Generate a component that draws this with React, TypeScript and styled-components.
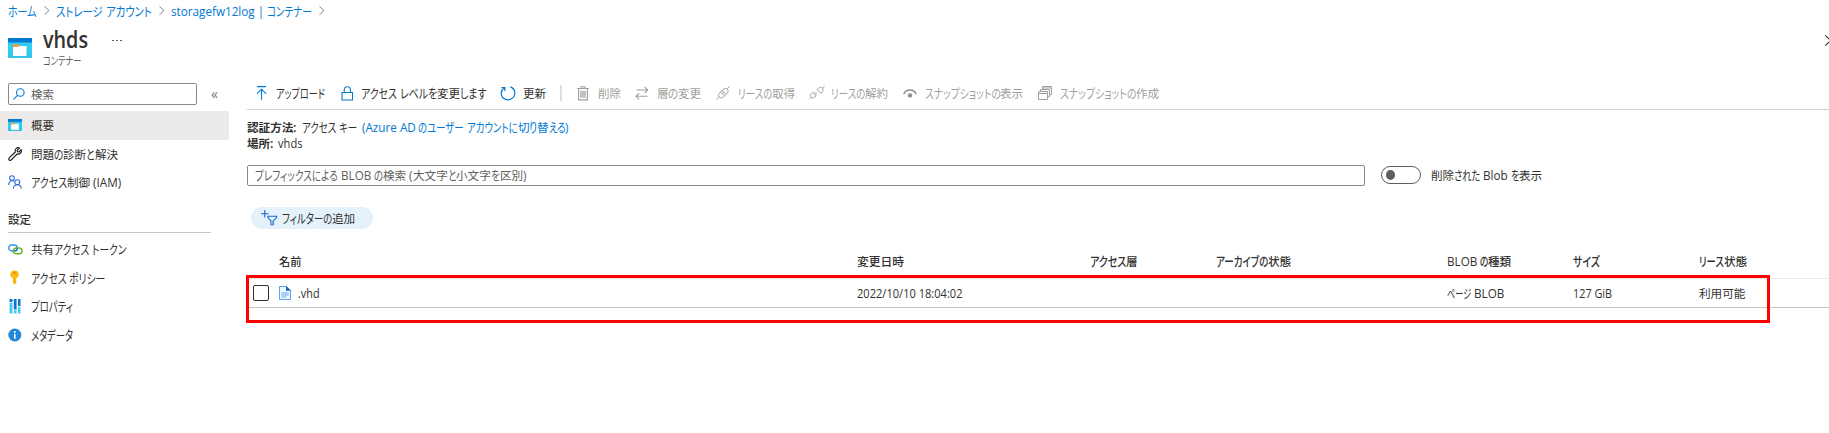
import React, { useLayoutEffect, useRef } from "react";
import styled, { createGlobalStyle, css } from "styled-components";

const Global = createGlobalStyle`
  html, body { margin: 0; padding: 0; background: #fff; overflow: hidden; }
  * { box-sizing: border-box; }
  body { font-family: "Open Sans", "Noto Sans CJK JP", sans-serif; font-size: 13px; color: #323130; }
`;

const Line = styled.span<{ $w: number; $weight: number; $color?: string; $size?: number }>`
  display: inline-flex;
  align-items: baseline;
  flex: none;
  width: ${(p) => p.$w}px;
  height: 16px;
  line-height: 16px;
  white-space: pre;
  font-size: ${(p) => p.$size ?? 13}px;
  font-weight: ${(p) => p.$weight};
  color: ${(p) => p.$color ?? "inherit"};
`;

const Run = styled.span<{ $kind: "kana" | "kanji" | "latin" }>`
  display: inline-block;
  flex: none;
  line-height: 16px;
  transform-origin: 0 50%;
  ${(p) =>
    p.$kind !== "latin" &&
    css`
      font-family: "Noto Sans CJK JP", sans-serif;
      font-size: ${p.$kind === "kana" ? 0.97 : 0.91}em;
      font-feature-settings: "palt";
    `}
`;

const KANA = /[\u3040-\u30ff]/;
const KANJI = /[\u4e00-\u9fff]/;
const LATIN_SCALE = 0.9;

const kindOf = (r: string) => (KANA.test(r) ? "kana" : KANJI.test(r) ? "kanji" : "latin");

type TextProps = { t: string; w: number; weight?: number; color?: string; size?: number };

function Text({ t, w, weight = 400, color, size }: TextProps) {
  const ref = useRef<HTMLSpanElement>(null);
  const runs = t.match(/[\u3040-\u30ff]+|[\u4e00-\u9fff]+|[^\u3040-\u30ff\u4e00-\u9fff]+/g) ?? [];

  useLayoutEffect(() => {
    const els = Array.from(ref.current?.children ?? []) as HTMLElement[];
    els.forEach((e) => {
      e.style.width = "auto";
      e.style.transform = "none";
    });
    const widths = els.map((e) => e.getBoundingClientRect().width);
    const hasKana = KANA.test(t);
    const fixedScale = (i: number) => {
      const kind = kindOf(runs[i]);
      if (!hasKana || kind === "kana") return null;
      return kind === "kanji" ? 0.98 : LATIN_SCALE;
    };
    let fixed = 0;
    let flexible = 0;
    els.forEach((_, i) => {
      const s = fixedScale(i);
      if (s === null) flexible += widths[i];
      else fixed += widths[i] * s;
    });
    const k = flexible ? (w - fixed) / flexible : 1;
    els.forEach((e, i) => {
      const f = fixedScale(i) ?? k;
      e.style.width = `${widths[i] * f}px`;
      e.style.transform = `scaleX(${f})`;
    });
  }, [t, w, weight, size]);

  return (
    <Line ref={ref} $w={w} $weight={weight} $color={color} $size={size}>
      {runs.map((r, i) => (
        <Run key={i} $kind={kindOf(r)}>
          {r}
        </Run>
      ))}
    </Line>
  );
}

/* ---------- icons ---------- */

const Svg = styled.svg`
  display: block;
  flex: none;
  fill: none;
  overflow: visible;
`;

const Crumb = () => (
  <Svg width="6" height="9" viewBox="0 0 6 9" stroke="#8a8886" strokeWidth="1">
    <path d="M.5.5 5 4.500.5 8.500" />
  </Svg>
);

const ContainerIcon = ({ w, h }: { w: number; h: number }) => (
  <Svg width={w} height={h} viewBox="0 0 24 20" preserveAspectRatio="none">
    <rect width="24" height="20" rx="0.8" fill="#35c3ea" />
    <path d="M0 4h24v12H0z" fill="#32d4f5" opacity=".55" />
    <path d="M0 4.500V.8Q0 0 .8 0h22.400q.8 0 .8.8V4.500z" fill="#0078d4" />
    <path d="M5 8h13.500v10H5z" fill="#fff" />
    <path d="M5 6.300h5.500l1.300 1.200-1.300 1.500H5z" fill="#f59a3c" />
  </Svg>
);

const SearchIcon = () => (
  <Svg width="12" height="12" viewBox="0 0 12 12" stroke="#0078d4" strokeWidth="1.1">
    <circle cx="7.300" cy="4.500" r="3.800" />
    <path d="M4.500 7.300.5 11.400" />
  </Svg>
);

const WrenchIcon = () => (
  <Svg width="14" height="14" viewBox="0 0 14 14" stroke="#1b1a19" strokeWidth="1.150" strokeLinejoin="round">
    <path d="M11.600 1.100 9.200 3.400l.2 1.400 1.400.2 2.400-2.300c.5 1.300.2 2.600-.7 3.500-.9.900-2.200 1.200-3.400.8L3.300 12.900c-.6.6-1.500.6-2.100.1-.6-.6-.6-1.500 0-2.100L7.300 5C6.900 3.800 7.200 2.500 8.100 1.600c.9-.9 2.300-1.100 3.500-.5z" />
  </Svg>
);

const PeopleIcon = () => (
  <Svg width="14" height="14" viewBox="0 0 14 14" stroke="#2b6fd6" strokeWidth="1.100">
    <circle cx="4" cy="3" r="2.300" />
    <path d="M.6 10c.1-2.800 1.500-4.300 3.500-4.300.8 0 1.500.2 2 .7" />
    <circle cx="9.300" cy="7.200" r="2.500" />
    <path d="M5.300 13.600c.2-2.400 1.800-3.800 4-3.800s3.800 1.400 4 3.800" />
  </Svg>
);

const LinkIcon = () => (
  <Svg width="15" height="11" viewBox="0 0 15 11" strokeWidth="1.400">
    <rect x=".8" y="1" width="8.500" height="5.800" rx="2.900" stroke="#2f9bea" />
    <rect x="5.200" y="4" width="8.800" height="5.800" rx="2.900" stroke="#6bb52c" />
    <path d="M6 6.800h1.200c1.200 0 2.100-1 2.100-2.500" stroke="#1b7fd0" />
  </Svg>
);

const KeyIcon = () => (
  <Svg width="14" height="15" viewBox="0 0 14 15">
    <path d="M6.500.5c2.500 0 4.300 1.600 4.300 3.900 0 1.700-.9 2.900-2.500 3.500v5L6.800 14.500 5 12.900V7.900C3.300 7.300 2.300 6.100 2.300 4.400 2.300 2.100 4 .5 6.500.5z" fill="#fdb813" />
    <circle cx="6.500" cy="2.800" r="1.100" fill="#c98410" />
    <path d="M6 8v5" stroke="#e9a50a" strokeWidth=".8" />
  </Svg>
);

const BarsIcon = () => (
  <Svg width="14" height="15" viewBox="0 0 14 15">
    <path d="M1.500 0h3v3h-3zM5.800 0h2.800v10.500H5.800zM10 0h2.500v7H10z" fill="#0f76cf" />
    <path d="M1.500 3.800h3V14.500h-3zM5.800 11.300h2.800v3.200H5.800zM10 7.800h2.500v6.700H10z" fill="#42cdef" />
  </Svg>
);

const InfoIcon = () => (
  <Svg width="14" height="14" viewBox="0 0 14 14">
    <circle cx="6.800" cy="7" r="6.500" fill="#2488d8" />
    <circle cx="6.800" cy="3.900" r="1" fill="#fff" />
    <path d="M6.800 5.900v4.900" stroke="#fff" strokeWidth="1.600" />
  </Svg>
);

const UploadIcon = () => (
  <Svg width="11" height="14" viewBox="0 0 11 14" stroke="#0078d4" strokeWidth="1.100">
    <path d="M1 .6h9M5.500 13.800V3.300M1 7.700l4.500-4.500L10 7.700" />
  </Svg>
);

const LockIcon = () => (
  <Svg width="13" height="15" viewBox="0 0 13 15" stroke="#0078d4" strokeWidth="1.100">
    <path d="M1 6.500h10.500v7.500H1zM3.200 6.500V3.800C3.200 1.900 4.500.7 6.300.7s3.100 1.200 3.100 3.100v2.700" />
  </Svg>
);

const RefreshIcon = () => (
  <Svg width="16" height="15" viewBox="0 0 16 15" stroke="#0078d4" strokeWidth="1.200">
    <path d="M4.300 1.800C2.300 3 1.200 5 1.200 7.200c0 3.800 3.100 6.700 6.800 6.700s6.800-3 6.800-6.700c0-2.900-1.800-5.300-4.500-6.300M1.500 1.500h3.300v3.400" />
  </Svg>
);

const gray = "#a19f9d";

const TrashIcon = () => (
  <Svg width="12" height="15" viewBox="0 0 12 15" stroke={gray} strokeWidth="1.100">
    <path d="M.3 2.500h11.400M4 2.300V.8h4v1.500M1.600 2.700v11.200h8.800V2.700" />
    <path d="M4 4.800v7M6 4.800v7M8 4.800v7" strokeWidth="1.300" />
  </Svg>
);

const SwapIcon = () => (
  <Svg width="14" height="14" viewBox="0 0 14 14" stroke={gray} strokeWidth="1.100">
    <path d="M1.500 4h11.300M9.700.9 12.800 4 9.700 7.100M12.500 10.300H1M4.100 7.200 1 10.300l3.100 3.100" />
  </Svg>
);

const PlugIcon = () => (
  <Svg width="14" height="14" viewBox="0 0 14 14" stroke={gray} strokeWidth="1">
    <path d="m3.300 7.300 4-4c1.200-1.200 2.900-1.200 4-.1s1.100 2.800-.1 4l-4 4c-1.100 1-2.700 1-3.800-.1s-1.200-2.700-.1-3.800zM.4 13.600l2.900-2.900M11.200 2.800 13.600.4M4.600 6l3.900 3.900M6.200 4.400l3.900 3.900M6.300 7.700l1.700-1.700" />
  </Svg>
);

const UnplugIcon = () => (
  <Svg width="16" height="14" viewBox="0 0 16 14" stroke={gray} strokeWidth="1">
    <path d="M8 3.600 9.800 2.200c1.100-1.100 2.600-1.100 3.600-.1s1 2.500-.1 3.600L11.900 7.500zM3.500 6.200 2.300 7.500c-1.100 1.100-1.100 2.500-.1 3.600s2.500 1 3.600-.1L7.300 9.800zM13.600 2 15.600.3M.3 13.300l2-2M5 7.700l1.600-1.600M6.200 8.800l1.600-1.600" />
  </Svg>
);

const EyeIcon = () => (
  <Svg width="14" height="9" viewBox="0 0 14 9">
    <path d="M.8 5.300C1.700 2.600 4 1.100 7 1.100s5.300 1.500 6.200 4.200" stroke="#8f8d8b" strokeWidth="1.500" />
    <circle cx="7" cy="6.400" r="2.200" fill="#8f8d8b" />
  </Svg>
);

const LayersIcon = () => (
  <Svg width="14" height="14" viewBox="0 0 14 14" stroke={gray} strokeWidth="1">
    <path d="M.5 5.500h9v8h-9zM.5 7.500h9M2.500 5.300V3.500h9v7.300H9.800M4.500 3.300V.5h9v8.200h-1.700M4.500 2h9" />
  </Svg>
);

const FilterIcon = () => (
  <Svg width="17" height="16" viewBox="0 0 17 16" stroke="#1267cf" strokeWidth="1.100">
    <path d="M3.800 0v7.600M0 3.800h7.600" />
    <path d="M6.800 6.300h8.900v1L12.400 11v3.800H10V11L6.800 7.300z" />
    <path d="M10 10.500h2.400v4H10z" fill="#7eaee8" stroke="none" />
  </Svg>
);

const FileIcon = () => (
  <Svg width="12" height="14" viewBox="0 0 12 14">
    <path d="M.5.5h7L11.500 4.500v9H.5z" fill="#eef6ff" stroke="#5ea0ef" />
    <path d="M7 0 12 4.800H7z" fill="#0f6cbd" />
    <path d="M2.300 7h7.400M2.300 9h7.400M2.300 11h5" stroke="#69a9f0" strokeWidth="1.100" />
  </Svg>
);

const CloseIcon = () => (
  <Svg width="11" height="11" viewBox="0 0 11 11" stroke="#323130" strokeWidth="1.100">
    <path d="m.3.300 10.400 10.400M10.700.3.300 10.700" />
  </Svg>
);

/* ---------- layout ---------- */

const Page = styled.div`
  width: 1829px;
  height: 433px;
  overflow: hidden;
  background: #fff;
`;

const Breadcrumbs = styled.nav`
  display: flex;
  align-items: center;
  height: 21px;
  padding-left: 8px;
  color: #0078d4;
  svg {
    margin: 0 6.500px 0 7px;
  }
`;

const Header = styled.header`
  display: flex;
  height: 62px;
  padding: 17px 0 0 8px;
`;

const HeaderTitles = styled.div`
  display: flex;
  flex-direction: column;
  margin: -7px 0 0 11px;
`;

const TitleRow = styled.div`
  display: flex;
  align-items: center;
  height: 17px;
`;

const Dots = styled.div<{ $gap: number; $size: number }>`
  display: flex;
  gap: ${(p) => p.$gap}px;
  i {
    width: ${(p) => p.$size}px;
    height: ${(p) => p.$size}px;
    border-radius: 50%;
    background: #494745;
  }
`;

const TitleDots = styled(Dots)`
  margin: 2px 0 0 24px;
`;

const Subtitle = styled.div`
  display: flex;
  margin-top: 4px;
  color: #605e5c;
`;

const CloseSlot = styled.div`
  flex: none;
  margin: -3px -7px 0 auto;
`;

const Columns = styled.div`
  display: flex;
`;

const Sidebar = styled.aside`
  width: 229px;
  flex: none;
`;

const SearchRow = styled.div`
  display: flex;
  align-items: center;
  gap: 14px;
  height: 22px;
  margin: 0 0 6px 8px;
`;

const SearchBox = styled.div`
  display: flex;
  align-items: center;
  gap: 6px;
  width: 189px;
  height: 22px;
  padding-left: 4px;
  border: 1px solid #8a8886;
  border-radius: 2px;
  color: #605e5c;
`;

const Collapse = styled.span`
  font-size: 14px;
  line-height: 16px;
  color: #797775;
`;

const NavItem = styled.div<{ $active?: boolean }>`
  display: flex;
  align-items: center;
  height: 28.600px;
  padding-left: 8px;
  background: ${(p) => (p.$active ? "#edebe9" : "transparent")};
`;

const NavIcon = styled.span`
  display: flex;
  width: 22.500px;
`;

const NavHeading = styled.div`
  display: flex;
  align-items: flex-end;
  width: 203px;
  height: 36.700px;
  margin: 0 0 1.500px 8px;
  padding-bottom: 5px;
  border-bottom: 1px solid #c8c6c4;
`;

const Main = styled.main`
  position: relative;
  width: 1582px;
  flex: none;
  margin-left: 18px;
`;

const Toolbar = styled.div`
  display: flex;
  align-items: center;
  height: 27px;
  padding-bottom: 6px;
  border-bottom: 1px solid #d2d0ce;
`;

const Tool = styled.div<{ $ml: number; $off?: boolean }>`
  display: flex;
  align-items: center;
  flex: none;
  margin-left: ${(p) => p.$ml}px;
  color: ${(p) => (p.$off ? "#a19f9d" : "#323130")};
`;

const ToolIcon = styled.span<{ $w: number }>`
  display: flex;
  width: ${(p) => p.$w}px;
`;

const Separator = styled.span`
  width: 2px;
  height: 16px;
  margin-left: 14px;
  background: #e1dfdd;
`;

const Facts = styled.div`
  padding-top: 9px;
  height: 55px;
`;

const Fact = styled.div`
  display: flex;
  gap: 4.500px;
  height: 16px;
`;

const SearchBar = styled.div`
  display: flex;
  align-items: center;
  height: 21px;
`;

const PrefixInput = styled.div`
  display: flex;
  align-items: center;
  width: 1118px;
  height: 21px;
  padding: 0 0 1px 7px;
  border: 1px solid #8a8886;
  border-radius: 2px;
  color: #605e5c;
`;

const Toggle = styled.span`
  display: flex;
  align-items: center;
  width: 40px;
  height: 18px;
  margin: 0 9.500px 1px 16px;
  padding-left: 4px;
  border: 1px solid #605e5c;
  border-radius: 9px;
  &::before {
    content: "";
    width: 9px;
    height: 10px;
    border-radius: 50%;
    background: #605e5c;
  }
`;

const ToggleLabel = styled.span`
  display: flex;
  padding-bottom: 2px;
`;

const FilterPill = styled.div`
  display: flex;
  align-items: center;
  gap: 4px;
  width: 122px;
  height: 22px;
  margin: 21px 0 0 4px;
  padding: 0 0 1px 10px;
  border-radius: 11px;
  background: #e5f1fb;
`;

const GridRow = styled.div<{ $head?: boolean }>`
  display: grid;
  grid-template-columns: 32px 578px 232.500px 126px 231px 126.500px 126px 1fr;
  align-items: center;
  height: ${(p) => (p.$head ? 50 : 29)}px;
  padding-top: ${(p) => (p.$head ? 15 : 0)}px;
  border-bottom: 1px solid ${(p) => (p.$head ? "#edebe9" : "#c8c6c4")};
`;

const Checkbox = styled.span`
  width: 16px;
  height: 16px;
  margin-left: 6px;
  border: 1px solid #323130;
  border-radius: 2px;
`;

const NameCell = styled.div`
  display: flex;
  align-items: center;
  gap: 7px;
`;

const RowDots = styled(Dots)`
  margin: -2px 0 0 121px;
`;

const Highlight = styled.div`
  position: absolute;
  left: -1px;
  top: 192px;
  width: 1524px;
  height: 48px;
  border: 3px solid #fe0000;
`;

const nav = [
  { t: "問題の診断と解決", w: 87.5, icon: <WrenchIcon /> },
  { t: "アクセス制御 (IAM)", w: 90.5, icon: <PeopleIcon /> },
];
const settings = [
  { t: "共有アクセス トークン", w: 96, icon: <LinkIcon /> },
  { t: "アクセス ポリシー", w: 75, icon: <KeyIcon /> },
  { t: "プロパティ", w: 42, icon: <BarsIcon /> },
  { t: "メタデータ", w: 42, icon: <InfoIcon /> },
];

const tools = [
  { t: "アップロード", w: 49, ml: 8.5, icon: <UploadIcon />, iw: 20.5 },
  { t: "アクセス レベルを変更します", w: 126, ml: 15.5, icon: <LockIcon />, iw: 20 },
  { t: "更新", w: 23, ml: 13.5, icon: <RefreshIcon />, iw: 23 },
];
const offTools = [
  { t: "削除", w: 23, ml: 15, icon: <TrashIcon />, iw: 20.5 },
  { t: "層の変更", w: 45, ml: 14.5, icon: <SwapIcon />, iw: 21.5 },
  { t: "リースの取得", w: 57.5, ml: 14.5, icon: <PlugIcon />, iw: 22 },
  { t: "リースの解約", w: 57.5, ml: 13, icon: <UnplugIcon />, iw: 22.5 },
  { t: "スナップショットの表示", w: 99, ml: 14.5, icon: <EyeIcon />, iw: 21.5 },
  { t: "スナップショットの作成", w: 99.5, ml: 14.5, icon: <LayersIcon />, iw: 21.5 },
];

export default function App() {
  return (
    <Page>
      <Global />
      <Breadcrumbs>
        <Text t="ホーム" w={28.5} />
        <Crumb />
        <Text t="ストレージ アカウント" w={95.5} />
        <Crumb />
        <Text t="storagefw12log | コンテナー" w={141} />
        <Crumb />
      </Breadcrumbs>
      <Header>
        <ContainerIcon w={24} h={20} />
        <HeaderTitles>
          <TitleRow>
            <Text t="vhds" w={45} size={22.5} weight={600} />
            <TitleDots $gap={2.5} $size={1.5}>
              <i />
              <i />
              <i />
            </TitleDots>
          </TitleRow>
          <Subtitle>
            <Text t="コンテナー" w={38.5} size={11.5} />
          </Subtitle>
        </HeaderTitles>
        <CloseSlot>
          <CloseIcon />
        </CloseSlot>
      </Header>
      <Columns>
        <Sidebar>
          <SearchRow>
            <SearchBox>
              <SearchIcon />
              <Text t="検索" w={23} />
            </SearchBox>
            <Collapse>«</Collapse>
          </SearchRow>
          <NavItem $active>
            <NavIcon>
              <ContainerIcon w={14} h={12} />
            </NavIcon>
            <Text t="概要" w={23} />
          </NavItem>
          {nav.map((n) => (
            <NavItem key={n.t}>
              <NavIcon>{n.icon}</NavIcon>
              <Text t={n.t} w={n.w} />
            </NavItem>
          ))}
          <NavHeading>
            <Text t="設定" w={23} weight={500} />
          </NavHeading>
          {settings.map((n) => (
            <NavItem key={n.t}>
              <NavIcon>{n.icon}</NavIcon>
              <Text t={n.t} w={n.w} />
            </NavItem>
          ))}
        </Sidebar>
        <Main>
          <Toolbar>
            {tools.map((b) => (
              <Tool key={b.t} $ml={b.ml}>
                <ToolIcon $w={b.iw}>{b.icon}</ToolIcon>
                <Text t={b.t} w={b.w} />
              </Tool>
            ))}
            <Separator />
            {offTools.map((b) => (
              <Tool key={b.t} $ml={b.ml} $off>
                <ToolIcon $w={b.iw}>{b.icon}</ToolIcon>
                <Text t={b.t} w={b.w} />
              </Tool>
            ))}
          </Toolbar>
          <Facts>
            <Fact>
              <Text t="認証方法:" w={50} weight={600} />
              <Text t="アクセス キー" w={55.5} />
              <Text t="(Azure AD のユーザー アカウントに切り替える)" w={207.5} color="#0078d4" />
            </Fact>
            <Fact>
              <Text t="場所:" w={26.5} weight={600} />
              <Text t="vhds" w={24.5} />
            </Fact>
          </Facts>
          <SearchBar>
            <PrefixInput>
              <Text t="プレフィックスによる BLOB の検索 (大文字と小文字を区別)" w={271.5} />
            </PrefixInput>
            <Toggle />
            <ToggleLabel>
              <Text t="削除された Blob を表示" w={112} />
            </ToggleLabel>
          </SearchBar>
          <FilterPill>
            <FilterIcon />
            <Text t="フィルターの追加" w={73.5} />
          </FilterPill>
          <GridRow $head>
            <span />
            <Text t="名前" w={22.5} weight={500} />
            <Text t="変更日時" w={47} weight={500} />
            <Text t="アクセス層" w={48} weight={500} />
            <Text t="アーカイブの状態" w={75.5} weight={500} />
            <Text t="BLOB の種類" w={65} weight={500} />
            <Text t="サイズ" w={27} weight={500} />
            <Text t="リース状態" w={48} weight={500} />
          </GridRow>
          <GridRow>
            <Checkbox />
            <NameCell>
              <FileIcon />
              <Text t=".vhd" w={21.5} />
            </NameCell>
            <Text t="2022/10/10 18:04:02" w={105.5} />
            <span />
            <span />
            <Text t="ページ BLOB" w={57.5} />
            <Text t="127 GiB" w={39} />
            <NameCell>
              <Text t="利用可能" w={46.5} />
              <RowDots $gap={2.5} $size={3}>
                <i />
                <i />
                <i />
              </RowDots>
            </NameCell>
          </GridRow>
          <Highlight />
        </Main>
      </Columns>
    </Page>
  );
}
